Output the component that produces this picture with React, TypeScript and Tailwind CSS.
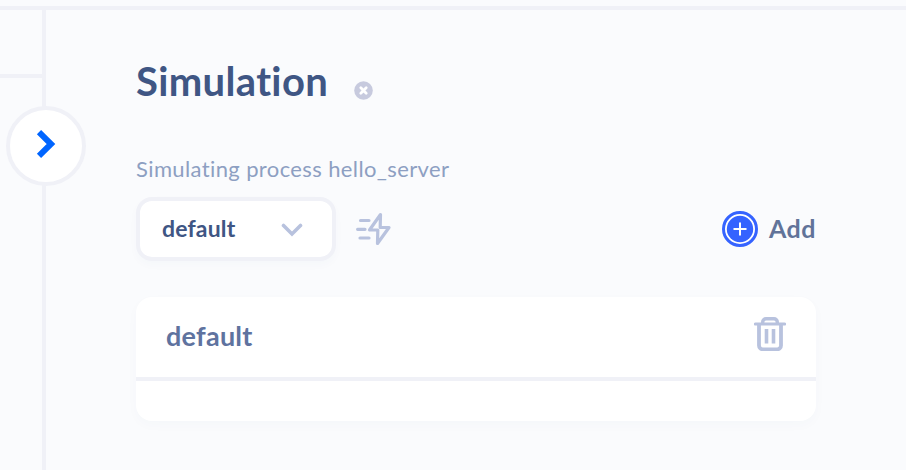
import React from "react";

function CloseIcon() {
  return (
    <svg width="20" height="20" viewBox="0 0 20 20" fill="none">
      <circle cx="9.5" cy="10.500" r="9.300" fill="#c7cade" />
      <path d="M6.800 7.800l5.400 5.400M12.200 7.800l-5.400 5.400" stroke="#fff" strokeWidth="2.800" strokeLinecap="round" />
    </svg>
  );
}

function BoltIcon() {
  return (
    <svg width="36" height="34" viewBox="0 0 36 34" fill="none" stroke="#b8c2de" strokeWidth="3.200" strokeLinecap="round" strokeLinejoin="round">
      <path d="M24.500 2.500L13.500 18h8.300L21.500 31.500L33 15.500h-8.800z" />
      <path d="M4.500 8.500h8.500M1.600 17.300h7.400M4 26h9" />
    </svg>
  );
}

function TrashIcon() {
  return (
    <svg width="32" height="34" viewBox="0 0 32 34" fill="none" stroke="#b8c2de">
      <path d="M1.500 7h29" strokeWidth="3.200" strokeLinecap="round" />
      <path d="M8.700 6.500V5a3.300 3.300 0 0 1 3.300-3.300h8A3.300 3.300 0 0 1 23.300 5v1.500" strokeWidth="3.400" />
      <path d="M5 7v21.500a3.800 3.800 0 0 0 3.800 3.800h14.400a3.800 3.800 0 0 0 3.800-3.800V7" strokeWidth="3.800" />
      <path d="M12.500 12v14.500M19.500 12v14.500" strokeWidth="3.600" />
    </svg>
  );
}

export default function App() {
  return (
    <div className="flex h-[470px] w-[906px] flex-col overflow-hidden bg-[#fafbfd] pt-1.5 font-['Lato',sans-serif]">
      <div className="h-1 shrink-0 bg-[#f0f1f7]" />
      <div className="flex flex-1">
        <aside className="relative w-[46px] shrink-0 border-r-4 border-[#f0f1f7]">
          <div className="h-[68px] border-b-4 border-[#f0f1f7]" />
          <button className="absolute left-1.5 top-24 flex size-20 items-center justify-center rounded-full border-4 border-[#f0f1f7] bg-white">
            <svg width="20" height="28" viewBox="0 0 20 28" fill="none" className="-mt-1">
              <path d="M3 2.200L15 14L3 25.800" stroke="#0065ff" strokeWidth="6" />
            </svg>
          </button>
        </aside>
        <main className="ml-[90px] w-[680px] pt-[46px]">
          <div className="flex h-12 items-center">
            <h1 className="mt-0.5 w-[218px] whitespace-nowrap text-[40px] font-bold leading-[48px] tracking-[0.35px] text-[#3f5684]">Simulation</h1>
            <button className="mt-5">
              <CloseIcon />
            </button>
          </div>
          <p className="mt-[51px] h-7 whitespace-nowrap text-[22px] leading-7 tracking-[0.38px] text-[#8d9fc2]">Simulating process hello_server</p>
          <div className="mt-[14px] flex h-16 items-center">
            <button className="flex h-16 w-[200px] items-center justify-between rounded-[16px] border-4 border-[#f0f1f7] bg-white pl-[22px] pr-[29px] shadow-[0_4px_10px_rgba(60,80,140,0.025)]">
              <span className="-mt-0.5 text-[23px] font-bold leading-7 tracking-[0.15px] text-[#3f5684]">default</span>
              <svg width="22" height="14" viewBox="0 0 22 14" fill="none" className="mt-0.5">
                <path d="M2.500 2.500L11 11L19.500 2.500" stroke="#b8c2de" strokeWidth="3.600" strokeLinecap="round" />
              </svg>
            </button>
            <button className="ml-5">
              <BoltIcon />
            </button>
            <button className="ml-auto flex w-[94px] items-center">
              <svg width="36" height="36" viewBox="0 0 36 36" fill="none" className="shrink-0">
                <circle cx="18" cy="18" r="16.500" fill="#fff" stroke="#3563ff" strokeWidth="3" />
                <circle cx="18" cy="18" r="13.200" fill="#3563ff" />
                <path d="M18 11.500v13M11.500 18h13" stroke="#fff" strokeWidth="2" />
              </svg>
              <span className="-mt-0.5 ml-[11px] text-[25px] font-bold leading-7 tracking-[0.5px] text-[#617399]">Add</span>
            </button>
          </div>
          <section className="mt-9 h-[124px] rounded-[16px] bg-white shadow-[0_4px_12px_rgba(60,80,140,0.025)]">
            <div className="flex h-[84px] items-start justify-between border-b-4 border-[#f0f1f7] pl-[30px] pr-[30px] pt-5">
              <span className="mt-[3px] text-[27px] font-bold leading-8 tracking-[0.25px] text-[#5f739f]">default</span>
              <button>
                <TrashIcon />
              </button>
            </div>
          </section>
        </main>
      </div>
    </div>
  );
}
